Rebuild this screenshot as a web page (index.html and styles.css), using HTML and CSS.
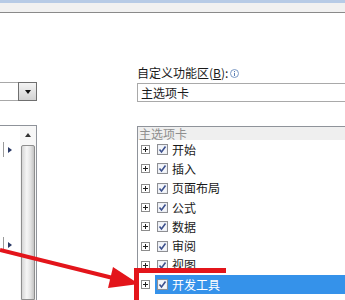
FILE: index.html
```html
<!DOCTYPE html>
<html lang="zh-CN">
<head>
  <meta charset="UTF-8">
  <meta name="viewport" content="width=device-width, initial-scale=1.0">
  <title>自定义功能区</title>
  <link rel="stylesheet" href="styles.css">
</head>
<body>
  <div class="topbar"></div>

  <div class="main">
    <div class="left-col">
      <div class="combo">
        <div class="combo-field"></div>
        <div class="combo-btn"><span class="arrow-down"></span></div>
      </div>
      <div class="left-list">
        <div class="left-rows">
          <div class="marker marker-first"><span class="tri"></span></div>
          <div class="marker marker-second"><span class="tri"></span></div>
        </div>
        <div class="scrollbar">
          <div class="scroll-up"><span class="arrow-up"></span></div>
          <div class="thumb"></div>
        </div>
      </div>
    </div>

    <div class="right-col">
      <div class="field-label">
        自定义功能区(<u>B</u>):
        <svg class="info" viewBox="0 0 9 9" width="9" height="9">
          <circle cx="4.5" cy="4.5" r="4" fill="none" stroke="#7a98c4" stroke-width="1"/>
          <rect x="4" y="2" width="1" height="1" fill="#5b7fb5"/>
          <rect x="4" y="3.8" width="1" height="3.2" fill="#5b7fb5"/>
        </svg>
      </div>
      <div class="textbox">主选项卡</div>

      <div class="tab-list">
        <div class="tab-header">主选项卡</div>
        <div id="tab-rows"></div>
      </div>
    </div>
  </div>

  <svg class="annotation" viewBox="0 0 345 300" width="345" height="300">
    <rect x="134" y="268" width="92" height="5" fill="#e3151b"/>
    <rect x="134" y="268" width="5" height="32" fill="#e3151b"/>
    <line x1="0" y1="250" x2="113" y2="278" stroke="#e3151b" stroke-width="4"/>
    <polygon points="139,284 108,288 113,267" fill="#e3151b"/>
  </svg>

  <script>
    const tabs = ["开始", "插入", "页面布局", "公式", "数据", "审阅", "视图", "开发工具"];
    const selected = "开发工具";

    const plusIcon = `
      <svg class="plus" viewBox="0 0 9 9" width="9" height="9">
        <rect x="0.5" y="0.5" width="8" height="8" fill="#fff" stroke="#8c8c8c"/>
        <rect x="2" y="4" width="5" height="1" fill="#222"/>
        <rect x="4" y="2" width="1" height="5" fill="#222"/>
      </svg>`;

    const checkIcon = `
      <svg class="check" viewBox="0 0 11 11" width="11" height="11">
        <rect x="0.5" y="0.5" width="10" height="10" fill="#e6eaf2" stroke="#8e8f93"/>
        <rect x="1.5" y="1.5" width="8" height="8" fill="#f4f6fa"/>
        <path d="M2.5 5.5 L4.5 8 L8.5 2.5" fill="none" stroke="#3d518e" stroke-width="1.6"/>
      </svg>`;

    const rowsBox = document.getElementById("tab-rows");
    rowsBox.innerHTML = tabs.map(name => `
      <div class="tab-row">
        ${plusIcon}
        <div class="tab-item ${name === selected ? "selected" : ""}">
          ${checkIcon}
          <span>${name}</span>
        </div>
      </div>`).join("");
  </script>
</body>
</html>
```

FILE: styles.css
```css
body {
  margin: 0;
  width: 345px;
  height: 300px;
  overflow: hidden;
  position: relative;
  background: #fff;
  color: #1a1a1a;
  font-family: "Noto Sans CJK SC", "Noto Sans", sans-serif;
  font-size: 12px;
}

.topbar {
  height: 9px;
  border-top: 3px solid #b7cbe6;
  border-bottom: 1px solid #8a8a8a;
  background: #f1f1f1;
}

.main {
  display: flex;
  height: 287px;
}

/* left column: the commands list, cut off by the picture */
.left-col {
  width: 37px;
  display: flex;
  flex-direction: column;
}

.combo {
  margin-top: 69px;
  height: 19px;
  display: flex;
}

.combo-field {
  flex: 1;
  border-top: 1px solid #a8a8a8;
  border-bottom: 1px solid #a8a8a8;
}

.combo-btn {
  width: 17px;
  border: 1px solid #6f6f6f;
  background: linear-gradient(#f4f4f4, #d2d2d2);
  display: flex;
  align-items: center;
  justify-content: center;
}

.arrow-down {
  width: 0;
  height: 0;
  border-left: 3px solid transparent;
  border-right: 3px solid transparent;
  border-top: 4px solid #111;
}

.left-list {
  margin-top: 24px;
  flex: 1;
  display: flex;
  border-top: 1px solid #8f939a;
  border-right: 1px solid #8f939a;
}

.left-rows {
  flex: 1;
}

.marker {
  height: 15px;
  margin-left: 3px;
  border-left: 1px solid #9a9a9a;
  display: flex;
  align-items: center;
}

.marker-first {
  margin-top: 16px;
}

.marker-second {
  margin-top: 80px;
}

.tri {
  margin-left: 4px;
  width: 0;
  height: 0;
  border-top: 3px solid transparent;
  border-bottom: 3px solid transparent;
  border-left: 4px solid #2b3a66;
}

.scrollbar {
  width: 16px;
  display: flex;
  flex-direction: column;
  background: #f7f7f7;
}

.scroll-up {
  height: 18px;
  display: flex;
  align-items: center;
  justify-content: center;
}

.arrow-up {
  width: 0;
  height: 0;
  border-left: 3px solid transparent;
  border-right: 3px solid transparent;
  border-bottom: 4px solid #333;
}

.thumb {
  flex: 1;
  margin: 1px 1px 0 1px;
  border: 1px solid #8e8e8e;
  border-radius: 2px 2px 0 0;
  background: linear-gradient(to right, #d6d6d6, #f6f6f6 40%, #e4e4e4 70%, #c4c4c4);
}

/* right column: customize ribbon */
.right-col {
  flex: 1;
  margin-left: 100px;
  display: flex;
  flex-direction: column;
}

.field-label {
  margin-top: 53px;
  height: 14px;
  line-height: 14px;
  display: flex;
  align-items: center;
  white-space: nowrap;
}

.field-label u {
  text-underline-offset: 1px;
}

.info {
  margin-left: 2px;
}

.textbox {
  margin-top: 3px;
  height: 19px;
  box-sizing: border-box;
  line-height: 17px;
  padding-left: 3px;
  border: 1px solid #a9a9a9;
  border-right: none;
}

.tab-list {
  margin-top: 24px;
  flex: 1;
  border-top: 1px solid #8f939a;
  border-left: 1px solid #8f939a;
}

.tab-header {
  height: 13px;
  line-height: 13px;
  padding-left: 1px;
  background: #efefef;
  color: #8e8e8e;
}

.tab-row {
  height: 19.3px;
  display: flex;
  align-items: center;
  padding-left: 3px;
}

.tab-item {
  flex: 1;
  height: 100%;
  margin-left: 5px;
  padding-left: 2px;
  display: flex;
  align-items: center;
  gap: 4px;
}

.tab-item span {
  line-height: 14px;
}

.tab-item.selected {
  background: #3592ea;
  color: #fff;
}

.annotation {
  position: absolute;
  left: 0;
  top: 0;
  pointer-events: none;
}
```
